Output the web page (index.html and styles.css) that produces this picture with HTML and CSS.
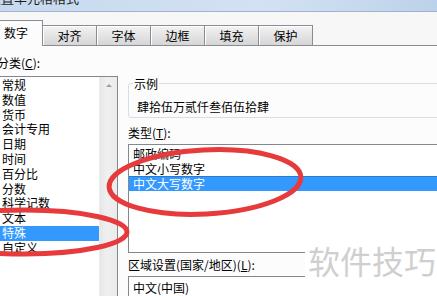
FILE: index.html
```html
<!DOCTYPE html>
<html lang="zh-CN">
<head>
<meta charset="UTF-8">
<title>设置单元格格式</title>
<link rel="stylesheet" href="styles.css">
</head>
<body>
<div class="dialog">
    <div class="titlebar"><span class="title">设置单元格格式</span></div>

    <div class="tabs">
        <div class="tab active">数字</div>
        <div class="tab">对齐</div>
        <div class="tab">字体</div>
        <div class="tab">边框</div>
        <div class="tab">填充</div>
        <div class="tab">保护</div>
    </div>

    <div class="page">
        <!-- category list -->
        <div class="left">
            <div class="label">分类(<u>C</u>):</div>
            <div class="listbox">
                <ul class="items">
                    <li>常规</li>
                    <li>数值</li>
                    <li>货币</li>
                    <li>会计专用</li>
                    <li>日期</li>
                    <li>时间</li>
                    <li>百分比</li>
                    <li>分数</li>
                    <li>科学记数</li>
                    <li>文本</li>
                    <li class="selected">特殊</li>
                    <li>自定义</li>
                </ul>
                <div class="scrollbar"><div class="arrow-up"></div></div>
            </div>
        </div>

        <!-- sample, type and locale -->
        <div class="right">
            <fieldset class="sample">
                <legend>示例</legend>
                <div class="sample-text">肆拾伍万贰仟叁佰伍拾肆</div>
            </fieldset>
            <div class="label type-label">类型(<u>T</u>):</div>
            <ul class="typelist">
                <li>邮政编码</li>
                <li>中文小写数字</li>
                <li class="selected">中文大写数字</li>
            </ul>
            <div class="label locale-label">区域设置(国家/地区)(<u>L</u>):</div>
            <div class="select">中文(中国)</div>
        </div>
    </div>

    <svg class="marks" width="437" height="296" viewBox="0 0 437 296">
        <ellipse cx="25" cy="232" rx="102" ry="22" />
        <ellipse cx="205" cy="182" rx="96" ry="32" transform="rotate(-3 205 182)" />
    </svg>

    <div class="watermark">软件技巧</div>
</div>
</body>
</html>
```

FILE: styles.css
```css
body {
    margin: 0;
    font-family: "Noto Sans CJK SC", "Liberation Sans", sans-serif;
    font-size: 12px;
    color: #000;
}

.dialog {
    position: relative;
    width: 437px;
    height: 296px;
    overflow: hidden;
    background-color: #f7f7f7;
}

/* window title, mostly cut off at the top */
.titlebar {
    height: 12px;
    box-sizing: border-box;
    background: linear-gradient(to right, #c6d9ee, #d3e2f2 60%, #bcd2ea);
    border-bottom: 1px solid #9fb4cc;
    overflow: hidden;
}

.title {
    display: block;
    margin: -9px 0 0 -12px;
    font-size: 13px;
    line-height: 14px;
    color: #1e1e1e;
}

/* tab strip */
.tabs {
    display: flex;
    align-items: flex-end;
    height: 34px;
    box-sizing: border-box;
    margin-left: -11px;
    border-bottom: 1px solid #898c95;
}

.tab {
    width: 55px;
    height: 20px;
    box-sizing: border-box;
    margin-left: -1px;
    border: 1px solid #898c95;
    border-bottom: none;
    background: linear-gradient(to bottom, #f3f3f3, #e4e4e4 50%, #d6d6d6);
    box-shadow: inset 1px 1px 0 #fff;
    text-align: center;
    line-height: 20px;
}

.tab:first-child {
    margin-left: 0;
}

.tab.active {
    position: relative;
    height: 26px;
    width: 54px;
    margin-bottom: -1px;
    background: #fcfcfc;
    box-shadow: none;
    line-height: 24px;
}

/* tab page */
.page {
    display: flex;
    gap: 10px;
    background-color: #fcfcfc;
    height: 250px;
}

.label {
    line-height: 15px;
}

.left {
    flex: none;
    width: 124px;
    margin-left: -6px;
}

.left .label {
    margin-top: 9px;
    padding-left: 3px;
}

.listbox {
    display: flex;
    margin-top: 6px;
    height: 260px;
    border: 1px solid #828790;
    background-color: #fff;
}

.items {
    flex: 1;
    list-style: none;
    margin: 0;
    padding: 1px 0 0;
}

.items li {
    line-height: 14.8px;
    padding-left: 7px;
    white-space: nowrap;
}

.items li.selected,
.typelist li.selected {
    background-color: #3399ff;
    color: #fff;
}

.scrollbar {
    width: 17px;
    background: linear-gradient(to right, #e6e6e6, #f0f0f0 40%, #ebebeb);
    border-left: 1px solid #ececec;
}

.arrow-up {
    width: 0;
    height: 0;
    margin: 7px auto 0;
    border-left: 3px solid transparent;
    border-right: 3px solid transparent;
    border-bottom: 3px solid #a0a0a0;
}

.right {
    flex: none;
    width: 330px;
}

.sample {
    margin: 30px 0 0;
    padding: 8px 6px 3px 4px;
    border: 1px solid #d5dfe5;
    border-radius: 3px;
    min-width: 0;
}

.sample legend {
    padding: 0 1px;
    line-height: 15px;
}

.sample-text {
    padding-left: 4px;
    line-height: 15px;
}

.type-label {
    margin-top: 7px;
}

.typelist {
    list-style: none;
    margin: 4px 0 0;
    padding: 1px 0 0;
    height: 109px;
    box-sizing: border-box;
    border: 1px solid #828790;
    background-color: #fff;
}

.typelist li {
    line-height: 15px;
    padding-left: 4px;
}

.typelist li.selected {
    box-shadow: inset 0 1px 0 #2a7bd0;
}

.locale-label {
    margin-top: 4px;
}

.select {
    margin-top: 4px;
    height: 24px;
    box-sizing: border-box;
    border: 1px solid #828790;
    background-color: #fff;
    padding-left: 4px;
    line-height: 22px;
}

/* red hand-drawn rings on top */
.marks {
    position: absolute;
    left: 0;
    top: 0;
    pointer-events: none;
}

.marks ellipse {
    fill: none;
    stroke: #e63a3c;
    stroke-width: 5;
}

.watermark {
    position: absolute;
    left: 305px;
    top: 238px;
    right: 0;
    bottom: 0;
    background-color: #fff;
    color: #cfcfcf;
    font-size: 32px;
    line-height: 44px;
    padding-left: 3px;
    white-space: nowrap;
}
```
